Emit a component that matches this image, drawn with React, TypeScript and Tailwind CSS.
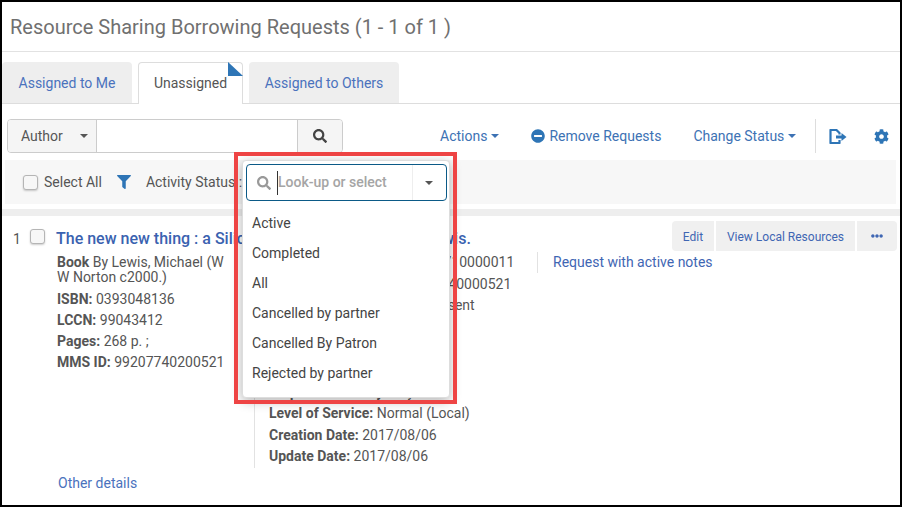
import React from 'react';
import { FaCog, FaEllipsisH, FaFilter, FaMinusCircle, FaSearch } from 'react-icons/fa';

const Caret = ({ className = '' }: { className?: string }) => (
  <span className={`inline-block w-0 h-0 border-x-[4px] border-x-transparent border-t-[4px] ${className}`} />
);

const Checkbox = () => (
  <span className="block w-[15px] h-[15px] shrink-0 rounded-[3px] border border-[#b5b5b5] bg-[#f7f7f7] shadow-[0_1px_2px_rgba(0,0,0,0.2)]" />
);

const Field = ({ label, value, tight }: { label: string; value: string; tight?: boolean }) => (
  <div className={tight ? 'h-[21px] leading-[21px] whitespace-nowrap' : 'h-[21.6px] leading-[21.6px] whitespace-nowrap'}>
    <b className="font-bold">{label}</b> {value}
  </div>
);

const statuses = ['Active', 'Completed', 'All', 'Cancelled by partner', 'Cancelled By Patron', 'Rejected by partner'];

export default function App() {
  return (
    <div className="relative w-[902px] h-[507px] overflow-hidden border-2 border-black bg-white font-['Roboto',sans-serif] text-[14px] text-[#555]">
      <div className="h-[50px] border-b border-[#e2e2e2] pl-2 text-[20px] leading-[51px] text-[#707070]">
        Resource Sharing Borrowing Requests (1 - 1 of 1 )
      </div>

      <div className="flex h-[52px] items-end border-b border-[#ddd] text-[14px]">
        <div className="flex h-[41px] w-[130px] items-center justify-center rounded-t bg-[#eee] pt-px text-[#4a72bd]">Assigned to Me</div>
        <div className="relative -mb-px ml-[6px] flex h-[42px] w-[105px] items-center justify-center rounded-t border border-b-0 border-[#ddd] bg-white text-[#555]">
          Unassigned
          <svg className="absolute -right-px -top-px" width="15" height="15" viewBox="0 0 15 15">
            <polygon points="0,0 15,14 0,14" fill="#2e75b6" />
          </svg>
        </div>
        <div className="ml-[6px] flex h-[41px] w-[150px] items-center justify-center rounded-t bg-[#eee] pt-px text-[#4a72bd]">Assigned to Others</div>
      </div>

      <div className="flex h-[56px] items-start pl-[5px] pt-[15px]">
        <div className="flex h-[34px] w-[336px] overflow-hidden rounded border border-[#ccc]">
          <div className="flex w-[88px] items-center bg-[#f5f5f5] pl-[13px] text-[#555]">
            Author
            <Caret className="ml-[17px] border-t-[#555]" />
          </div>
          <div className="flex-1 border-x border-[#ccc] bg-white" />
          <div className="flex w-[44px] items-center justify-center bg-[#f5f5f5]">
            <FaSearch size={14} className="text-[#444]" />
          </div>
        </div>
        <div className="flex h-[34px] items-center text-[#3d72b4]">
          <span className="ml-[97px] flex items-center">
            Actions
            <Caret className="ml-[4px] border-t-[#3d72b4]" />
          </span>
          <FaMinusCircle size={14} className="ml-[32px] text-[#2e75b6]" />
          <span className="ml-[4px]">Remove Requests</span>
          <span className="ml-[32px] flex items-center">
            Change Status
            <Caret className="ml-[4px] border-t-[#3d72b4]" />
          </span>
          <span className="ml-[19px] h-[34px] w-px bg-[#ddd]" />
          <svg className="ml-[13px]" width="18" height="15" viewBox="0 0 18 15" fill="none" stroke="#2e75b6" strokeWidth="2.2">
            <path d="M10.5 5.5V4L7.5 1H1.5v13h9v-3" strokeLinejoin="round" />
            <path d="M7 8h6" strokeWidth="3" />
            <path d="M12.5 4l5 4-5 4z" fill="#2e75b6" stroke="none" />
          </svg>
          <FaCog size={15} className="ml-[27px] text-[#2e75b6]" />
        </div>
      </div>

      <div className="ml-[3px] flex h-[44px] w-[891px] items-center bg-[#f7f7f7] pl-[18px]">
        <Checkbox />
        <span className="ml-[6px]">Select All</span>
        <FaFilter size={14} className="ml-[15px] text-[#2e75b6]" />
        <span className="ml-[15px]">Activity Status :</span>
      </div>

      <div className="mt-[5px] h-[7px] bg-[#eee]" />

      <div className="flex pl-[11px] pt-[13px]">
        <span className="w-[17px] pt-[1px] leading-[18px]">1</span>
        <Checkbox />
        <div className="ml-[11px] flex-1">
          <div className="h-[22px] text-[16px] font-medium leading-[20px] text-[#3a62b0] whitespace-nowrap">
            The new new thing : a Silicon Valley story / Michael Lewis.
          </div>
          <div className="mt-[1px] flex">
            <div className="w-[198px] pl-px">
              <div className="w-[172px] pb-[3px] pt-[3px] leading-[15px]">
                <b className="font-bold">Book</b> By Lewis, Michael (W W Norton c2000.)
              </div>
              <div className="mt-[1px]">
                <Field tight label="ISBN:" value="0393048136" />
                <Field tight label="LCCN:" value="99043412" />
                <Field tight label="Pages:" value="268 p. ;" />
                <Field tight label="MMS ID:" value="99207740200521" />
              </div>
            </div>
            <div className="h-[216px] w-[283px] border-l border-[#e2e2e2] pl-[14px]">
              <Field label="External Identifier:" value="0123456710000011" />
              <Field label="Internal Identifier:" value="0123456740000521" />
              <Field label="State:" value="Request has not been sent" />
              <div className="h-[64.8px]" />
              <Field label="Requester Priority:" value="Any" />
              <Field label="Level of Service:" value="Normal (Local)" />
              <Field label="Creation Date:" value="2017/08/06" />
              <Field label="Update Date:" value="2017/08/06" />
            </div>
            <div className="h-[21px] border-l border-[#e2e2e2] pl-[15px] leading-[21px] text-[#3f66b3]">
              Request with active notes
            </div>
          </div>
          <div className="mt-[5px] pl-[2px] text-[#4a72bd]">Other details</div>
        </div>
      </div>

      <div className="absolute left-[670px] top-[219px] flex h-[30px] gap-[2px] text-[12px] text-[#3f66b3]">
        <span className="flex w-[42px] items-center justify-center rounded-l bg-[#f0f0f0] pt-px">Edit</span>
        <span className="flex w-[139px] items-center justify-center bg-[#f0f0f0] pt-px">View Local Resources</span>
        <span className="flex w-[40px] items-center justify-center rounded-r bg-[#f0f0f0]">
          <FaEllipsisH size={12} />
        </span>
      </div>

      <div className="absolute left-[240px] top-[158px] h-[238px] w-[208px] rounded border border-[#ddd] bg-white px-[3px] pt-[3px] shadow-[0_3px_12px_rgba(0,0,0,0.3)]">
        <div className="flex h-[37px] w-[201px] items-center rounded border border-[#0b5a87] pl-[10px]">
          <FaSearch size={14} className="text-[#999]" />
          <span className="ml-[6px] h-[24px] w-px bg-[#333]" />
          <span className="font-medium text-[#a5a5a5]">Look-up or select</span>
          <span className="ml-[25px] flex h-full flex-1 items-center justify-center border-l border-[#eee]">
            <Caret className="border-t-[#555]" />
          </span>
        </div>
        <div className="mt-[7px] text-[#444]">
          {statuses.map((s) => (
            <div key={s} className="h-[30px] pl-[6px] leading-[30px]">{s}</div>
          ))}
        </div>
      </div>

      <div className="pointer-events-none absolute left-[232px] top-[150px] h-[252px] w-[223px] border-4 border-[#ee4444]" />
    </div>
  );
}
